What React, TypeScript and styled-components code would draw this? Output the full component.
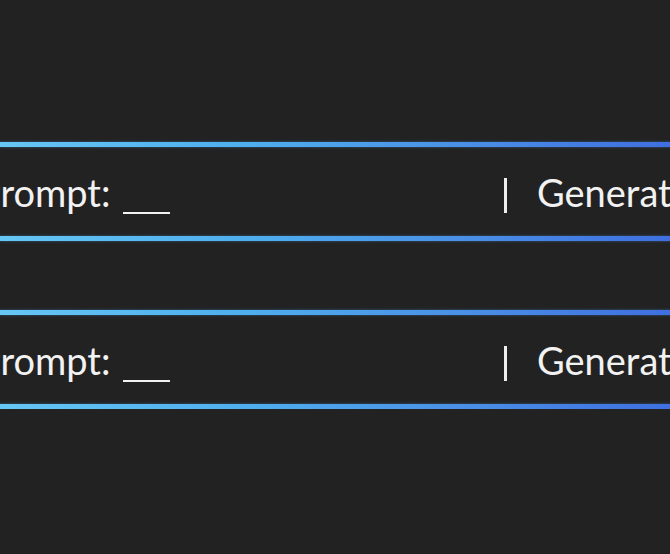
import React from "react";
import styled, { createGlobalStyle } from "styled-components";

const Global = createGlobalStyle`
  html, body {
    margin: 0;
    padding: 0;
    background: #222222;
    overflow: hidden;
  }
  body {
    width: 670px;
    height: 554px;
    font-family: "Lato", "Noto Sans", sans-serif;
  }
`;

const Stage = styled.div`
  display: flex;
  flex-direction: column;
  gap: 69px;
  padding-top: 142px;
  width: 670px;
  overflow: hidden;
`;

const Field = styled.div`
  display: flex;
  flex-direction: column;
`;

const Line = styled.div`
  height: 5px;
  width: 100%;
  background: linear-gradient(90deg, #66c6f4 0%, #4fb0ee 35%, #4a8fe6 70%, #3f6fe0 100%);
  box-shadow: 0 0 3px rgba(80, 160, 240, 0.45);
`;

const Row = styled.div`
  height: 89px;
  display: flex;
  align-items: center;
  white-space: nowrap;
  color: #f2f2f2;
  font-size: 38px;
  font-weight: 400;
`;

const Prompt = styled.span<{ $shift: number }>`
  margin-left: ${(p) => -p.$shift}px;
  width: ${(p) => 504 + p.$shift}px;
  flex: none;
  display: flex;
  align-items: baseline;
  gap: 12px;
`;

const Blank = styled.span`
  display: inline-block;
  width: 47px;
  height: 2px;
  background: #f2f2f2;
  transform: translateY(7px);
`;

const Caret = styled.span`
  flex: none;
  width: 3px;
  height: 35px;
  background: #eeeeee;
  margin-top: 8px;
`;

const Action = styled.span`
  margin-left: 30px;
  flex: none;
`;

function PromptField() {
  return (
    <Field>
      <Line />
      <Row>
        <Prompt $shift={22}>
          Prompt: <Blank />
        </Prompt>
        <Caret />
        <Action>Generate</Action>
      </Row>
      <Line />
    </Field>
  );
}

export default function App() {
  return (
    <>
      <Global />
      <Stage>
        <PromptField />
        <PromptField />
      </Stage>
    </>
  );
}
